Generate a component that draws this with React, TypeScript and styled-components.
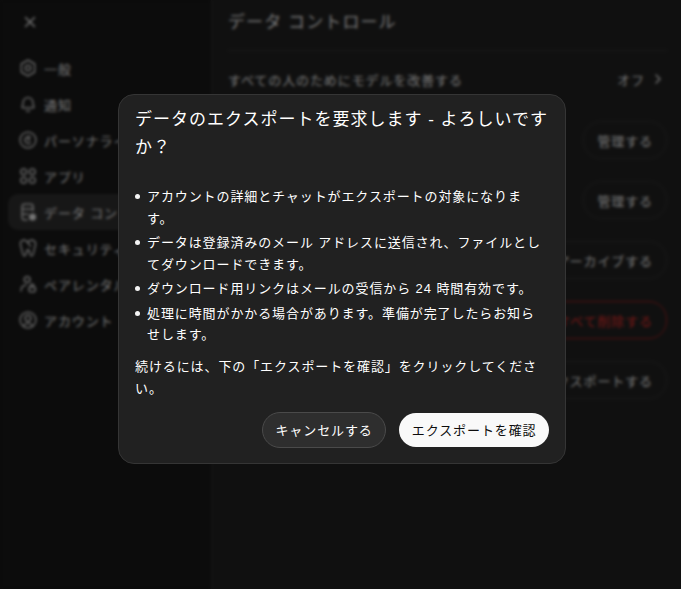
import { ReactNode } from 'react';
import styled, { createGlobalStyle } from 'styled-components';
import { X, ChevronRight } from 'lucide-react';

const GlobalStyle = createGlobalStyle`
  html, body { margin: 0; padding: 0; background: #0a0a0a; }
  body { font-family: "Liberation Sans", "Noto Sans CJK JP", sans-serif; letter-spacing: 0.9px; }
`;

const icons: Record<string, ReactNode> = {
  general: (
    <>
      <path d="M12 2.500l8 4.600v9.800l-8 4.600-8-4.600V7.100z" />
      <circle cx="12" cy="12" r="3.200" />
    </>
  ),
  bell: (
    <>
      <path d="M5 15c1-1.500 1.200-3 1.200-5a5.800 5.800 0 0 1 11.600 0c0 2 .2 3.500 1.200 5 .5.800 0 1.500-1 1.500H6c-1 0-1.500-.7-1-1.500z" />
      <path d="M10 20.500h4" />
    </>
  ),
  person: (
    <>
      <circle cx="12" cy="12" r="9.500" />
      <path d="M15 8.500a4.200 4.200 0 1 0 0 7M12.500 9v3h2" />
    </>
  ),
  apps: (
    <>
      <circle cx="6.800" cy="6.800" r="3.500" />
      <circle cx="17.200" cy="6.800" r="3.500" />
      <circle cx="6.800" cy="17.200" r="3.500" />
      <circle cx="17.200" cy="17.200" r="3.500" />
    </>
  ),
  data: (
    <>
      <path d="M11 21.500H8a3 3 0 0 1-3-3v-13a3 3 0 0 1 3-3h7a3 3 0 0 1 3 3v5" />
      <path d="M5 8.500h13M5 14.500h7" />
      <circle cx="17.500" cy="18" r="3.500" fill="currentColor" />
    </>
  ),
  security: (
    <>
      <path d="M7 2.500C4 2.500 2.500 5 3 8c.5 3 1.200 4 1.700 7s1 6.500 3 6.500 1.800-4 3-6.500c.6-1.300 1.500-1.300 2 0" />
      <path d="M16 2.500c3.200-.3 5.500 2.200 5 5.500-.5 3-1.200 4-1.700 7s-1 6.500-3 6.500-2-3-2.800-6.500" />
      <path d="M7 2.500c2.500 0 4 1.500 5.500 4l2.500 3.500M16 2.500c-1.500 0-2.500.7-3.500 2" />
    </>
  ),
  parent: (
    <>
      <circle cx="11" cy="6.500" r="3.500" />
      <path d="M3.500 20.500c0-4 2.500-7 6.500-7.500" />
      <rect x="13" y="15.500" width="8" height="6" rx="3" />
      <path d="M15 15.500V14a2 2 0 0 1 4 0v1.500" />
    </>
  ),
  account: (
    <>
      <circle cx="12" cy="12" r="9.500" />
      <circle cx="12" cy="10" r="3.500" />
      <path d="M6.500 18.800c1.500-2 3.300-3 5.500-3s4 1 5.500 3" />
    </>
  ),
};

const navItems = [
  { key: 'general', label: '一般' },
  { key: 'bell', label: '通知' },
  { key: 'person', label: 'パーソナライズ' },
  { key: 'apps', label: 'アプリ' },
  { key: 'data', label: 'データ コントロール', active: true },
  { key: 'security', label: 'セキュリティ' },
  { key: 'parent', label: 'ペアレンタル コントロール' },
  { key: 'account', label: 'アカウント' },
];

const rows = [
  { label: '共有リンク', action: '管理する' },
  { label: 'アーカイブ済みのチャット', action: '管理する' },
  { label: 'すべてのチャットをアーカイブする', action: 'すべてアーカイブする' },
  { label: 'すべてのチャットを削除する', action: 'すべて削除する', danger: true },
  { label: 'データをエクスポートする', action: 'データをエクスポートする' },
];

export default function App() {
  return (
    <Page>
      <GlobalStyle />
      <Sidebar>
        <CloseButton>
          <X size={18} strokeWidth={2} />
        </CloseButton>
        <Nav>
          {navItems.map((item) => (
            <NavItem key={item.key} $active={item.active}>
              <NavIcon viewBox="0 0 24 24">{icons[item.key]}</NavIcon>
              <NavLabel>{item.label}</NavLabel>
            </NavItem>
          ))}
        </Nav>
      </Sidebar>
      <Content>
        <Heading>データ コントロール</Heading>
        <FirstRow>
          <RowLabel>すべての人のためにモデルを改善する</RowLabel>
          <OffValue>
            オフ
            <ChevronRight size={16} strokeWidth={2} />
          </OffValue>
        </FirstRow>
        {rows.map((row) => (
          <Row key={row.label}>
            <RowLabel>{row.label}</RowLabel>
            <RowButton $danger={row.danger}>{row.action}</RowButton>
          </Row>
        ))}
      </Content>
      <Overlay>
        <Modal>
          <Title>データのエクスポートを要求します - よろしいですか？</Title>
          <Points>
            <li>アカウントの詳細とチャットがエクスポートの対象になります。</li>
            <li>データは登録済みのメール アドレスに送信され、ファイルとしてダウンロードできます。</li>
            <li>ダウンロード用リンクはメールの受信から 24 時間有効です。</li>
            <li>処理に時間がかかる場合があります。準備が完了したらお知らせします。</li>
          </Points>
          <Note>続けるには、下の「エクスポートを確認」をクリックしてください。</Note>
          <Actions>
            <CancelButton>キャンセルする</CancelButton>
            <ConfirmButton>エクスポートを確認</ConfirmButton>
          </Actions>
        </Modal>
      </Overlay>
    </Page>
  );
}

const Page = styled.div`
  position: relative;
  display: flex;
  width: 681px;
  height: 589px;
  overflow: hidden;
  background: #212121;
  color: #ececec;
`;
const Sidebar = styled.div`
  width: 212px;
  flex-shrink: 0;
  padding: 12px 8px;
  box-sizing: border-box;
  background: #181818;
  border-right: 1px solid #2a2a2a;
`;
const CloseButton = styled.div`
  display: flex;
  align-items: center;
  justify-content: center;
  width: 36px;
  height: 20px;
  margin: 0 0 0 4px;
  color: #ececec;
`;
const Nav = styled.div`
  display: flex;
  flex-direction: column;
  margin-top: 18px;
`;
const NavItem = styled.div<{ $active?: boolean }>`
  display: flex;
  align-items: center;
  gap: 6px;
  height: 36px;
  padding: 0 10px;
  border-radius: 10px;
  background: ${(p) => (p.$active ? '#2f2f2f' : 'transparent')};
`;
const NavIcon = styled.svg`
  width: 20px;
  height: 20px;
  flex-shrink: 0;
  fill: none;
  stroke: currentColor;
  stroke-width: 1.5;
  stroke-linecap: round;
  stroke-linejoin: round;
`;
const NavLabel = styled.span`
  font-size: 13px;
  white-space: nowrap;
`;
const Content = styled.div`
  flex: 1;
  padding: 12px 14px 0 16px;
`;
const Heading = styled.div`
  font-size: 17px;
  letter-spacing: 1.1px;
  line-height: 22px;
  padding-bottom: 16px;
  border-bottom: 1px solid #333;
`;
const FirstRow = styled.div`
  display: flex;
  align-items: center;
  justify-content: space-between;
  box-sizing: border-box;
  height: 59px;
  padding-bottom: 3px;
`;
const Row = styled.div`
  display: flex;
  align-items: center;
  justify-content: space-between;
  height: 60px;
  white-space: nowrap;
`;
const RowLabel = styled.span`
  font-size: 13px;
`;
const OffValue = styled.span`
  display: flex;
  align-items: center;
  gap: 5px;
  padding-right: 1px;
  font-size: 13px;
`;
const RowButton = styled.div<{ $danger?: boolean }>`
  display: flex;
  align-items: center;
  height: 36px;
  padding: 0 13px;
  border-radius: 18px;
  font-size: 13px;
  color: ${(p) => (p.$danger ? '#e02e2a' : '#ececec')};
  border: 1px solid ${(p) => (p.$danger ? '#a5211e' : '#333')};
`;
const Overlay = styled.div`
  position: absolute;
  inset: 0;
  background: rgba(0, 0, 0, 0.5);
  backdrop-filter: blur(1.5px);
`;
const Modal = styled.div`
  position: absolute;
  left: 118px;
  top: 94px;
  width: 448px;
  height: 370px;
  box-sizing: border-box;
  padding: 11px 16px 0 16px;
  background: #212121;
  border: 1px solid #353535;
  border-radius: 16px;
  color: #fff;
`;
const Title = styled.div`
  font-size: 17px;
  letter-spacing: 1px;
  line-height: 28px;
`;
const Points = styled.ul`
  margin: 24px 0 0;
  padding: 0 8px 0 12px;
  list-style: none;
  font-size: 13px;
  line-height: 21.5px;
  li {
    position: relative;
    margin-bottom: 3px;
  }
  li::before {
    content: '';
    position: absolute;
    left: -12px;
    top: 8px;
    width: 5px;
    height: 5px;
    border-radius: 50%;
    background: #f4f4f4;
  }
`;
const Note = styled.p`
  margin: 10px 0 0;
  font-size: 13px;
  line-height: 22px;
`;
const Actions = styled.div`
  display: flex;
  justify-content: flex-end;
  align-items: center;
  gap: 13px;
  margin-top: 12px;
`;
const CancelButton = styled.div`
  display: flex;
  align-items: center;
  height: 34px;
  padding: 0 12.5px;
  border-radius: 18px;
  border: 1px solid #4a4a4a;
  background: #2e2e2e;
  font-size: 13px;
`;
const ConfirmButton = styled.div`
  display: flex;
  align-items: center;
  height: 34px;
  padding: 0 12.5px;
  border-radius: 17px;
  background: #f9f9f9;
  color: #0d0d0d;
  font-size: 13px;
`;
